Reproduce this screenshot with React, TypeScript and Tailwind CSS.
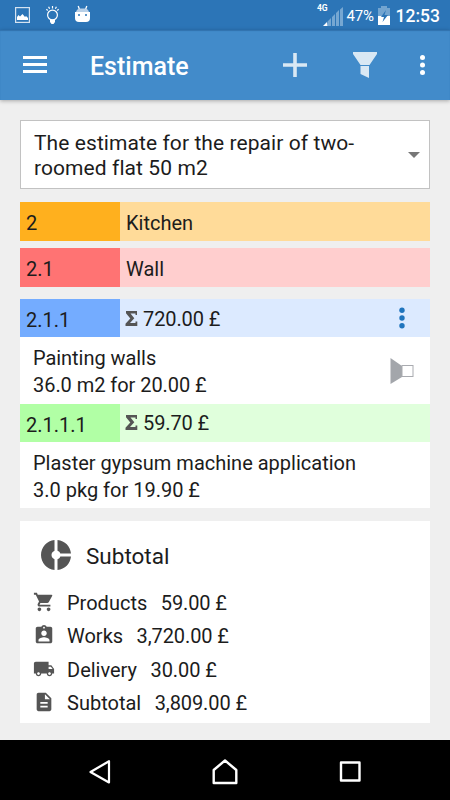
import React from 'react';
import { MdAssignmentInd, MdDescription, MdDonutSmall, MdLocalShipping, MdShoppingCart } from 'react-icons/md';

const totals = [
  { label: 'Products', value: '59.00 £', icon: MdShoppingCart },
  { label: 'Works', value: '3,720.00 £', icon: MdAssignmentInd },
  { label: 'Delivery', value: '30.00 £', icon: MdLocalShipping },
  { label: 'Subtotal', value: '3,809.00 £', icon: MdDescription },
];

const StatusBar: React.FC = () => (
  <div className="flex h-[30px] shrink-0 items-center bg-[#2c75b7] pl-[15px] pr-[10px] text-white">
    <svg width="15" height="16" viewBox="0 0 15 16" fill="none">
      <rect x="0.6" y="0.6" width="13.8" height="14.8" stroke="#d5e3f1" strokeWidth="1.2" />
      <path d="M2 13v-3l1.5-2 1.5 1.5L7.5 7 10 10l1-1 2 2v2z" fill="#fff" />
    </svg>
    <svg className="ml-[16px]" width="13" height="20" viewBox="0 0 13 20" fill="none" stroke="#fff" strokeWidth="1.2">
      <circle cx="6.5" cy="10" r="4.9" />
      <path d="M6.5 1v2.5M2.6 1.8l1 2M10.4 1.8l-1 2M.3 4.3l1.5 1.2M12.7 4.3l-1.5 1.2" />
      <path d="M4 14.5h5v2.5l-1.5 2h-2L4 17z" fill="#fff" stroke="none" />
    </svg>
    <svg className="mb-[3px] ml-[16px]" width="15" height="18" viewBox="0 0 15 18">
      <path d="M3.2 1l1.3 3.5M11.8 1l-1.3 3.5" stroke="#fff" strokeWidth="1.3" />
      <path d="M0 7h15v6q0 4-4 4H4q-4 0-4-4z" fill="#fff" />
      <path d="M1 7q1-3.500 4-3.500h5q3 0 4 3.500z" fill="#b9d0e7" />
      <path d="M3 9h2v2H3zM10 9h2v2h-2z" fill="#5d96c9" />
    </svg>
    <div className="ml-auto flex items-center">
      <span className="mb-[15px] text-[8.500px] leading-[8px] font-bold">4G</span>
      <svg className="mt-[2px] -ml-[5px]" width="20" height="19" viewBox="0 0 20 19">
        <path d="M4.500 14.500L8 11v8H4.500zM9 10l3-3v12H9zM13 6l3-3v16h-3zM17 2.500L20 0v19h-3z" fill="#76a7d2" />
        <path d="M0 19l4-4 .5 4z" fill="#fff" />
      </svg>
      <span className="mt-[2px] ml-[4px] w-[28px] text-[15px] tracking-[-0.2px]">47%</span>
      <svg className="ml-[3px]" width="12" height="19" viewBox="0 0 12 19">
        <path d="M3 0h6v2h3v9H0V2h3z" fill="#72a4d0" />
        <path d="M0 10h12v9H0z" fill="#fff" />
        <path d="M8 4L3 11h3l-1.500 5L10 9H6.500z" fill="#2c75b7" />
      </svg>
      <span className="mt-[2px] ml-[6px] text-[17.500px] font-medium">12:53</span>
    </div>
  </div>
);

const Header: React.FC = () => (
  <header className="z-10 flex h-[70px] shrink-0 items-center bg-[#428bca] pl-[23px] pr-[24px] shadow-[inset_0_1px_1px_#3172ad,0_1px_4px_rgba(0,0,0,0.3)]">
    <div className="mb-[1px] flex w-6 flex-col gap-[4px]">
      <span className="h-[3px] bg-white" />
      <span className="h-[3px] bg-white" />
      <span className="h-[3px] bg-white" />
    </div>
    <h1 className="mt-[3px] ml-[43px] text-[25px] leading-8 font-medium text-white">Estimate</h1>
    <svg className="ml-auto" width="24" height="24" viewBox="0 0 24 24" fill="#d9e8f4">
      <path d="M10.200 0h3.600v10.200H24v3.600H13.800V24h-3.600V13.800H0v-3.600h10.200z" />
    </svg>
    <svg className="ml-[46px]" width="24" height="26" viewBox="0 0 24 26" fill="#d9e8f4">
      <path d="M0 0h24v2l-7.500 11h-9L0 2zM7.500 14h8.500v12l-8.500-4z" />
    </svg>
    <svg className="ml-[43px]" width="6" height="22" viewBox="0 0 6 22" fill="#fff">
      <circle cx="2.500" cy="3.500" r="2.500" />
      <circle cx="2.500" cy="11" r="2.500" />
      <circle cx="2.500" cy="18.500" r="2.500" />
    </svg>
  </header>
);

const Sum: React.FC<{ value: string }> = ({ value }) => (
  <span className="flex items-center">
    <svg className="mr-[5px] mb-[1px]" width="13" height="15" viewBox="0 0 13 15" fill="#555">
      <path d="M1 0h11v4h-1.500V2.500H5.500L9.300 7.300 5 12h5.500v-1.500H12.300V15H.5v-2.300l4.800-5.200L1 2.200z" />
    </svg>
    {value}
  </span>
);

const App: React.FC = () => {
  return (
    <div className="flex h-[800px] w-[450px] flex-col overflow-hidden bg-[#efefef] font-['Roboto',sans-serif] text-[20px] text-[#1c1c1c]">
      <StatusBar />
      <Header />

      <main className="flex-1 px-5 pt-[20px]">
        <div className="flex h-[69px] items-center justify-between border border-[#c2c2c2] bg-white pr-[9px] pl-[13px]">
          <p className="w-[350px] pt-[2px] text-[21px] leading-[25px] tracking-[0.08px]">The estimate for the repair of two-roomed flat 50 m2</p>
          <svg width="12" height="6" viewBox="0 0 12 6">
            <path d="M0 0h12L6 6z" fill="#777" />
          </svg>
        </div>

        <div className="mt-[13px] flex h-[39px] items-center bg-[#ffdb99]">
          <div className="flex h-full w-[100px] items-center bg-[#ffb01e] pl-[6px] pt-[2px]">2</div>
          <span className="pt-[2px] pl-[6px]">Kitchen</span>
        </div>
        <div className="mt-[7px] flex h-[39px] items-center bg-[#ffcece]">
          <div className="flex h-full w-[100px] items-center bg-[#ff7373] pl-[6px] pt-[2px]">2.1</div>
          <span className="pt-[2px] pl-[6px]">Wall</span>
        </div>

        <section className="mt-[12px] h-[209px] bg-white">
          <div className="flex h-[38px] items-center bg-[#dceaff] pr-[25px]">
            <div className="flex h-full w-[100px] items-center bg-[#74acff] pt-[4px] pl-[6px]">2.1.1</div>
            <div className="pt-[1px] pl-[5px] tracking-[-0.1px]"><Sum value="720.00 £" /></div>
            <svg className="ml-auto" width="6" height="22" viewBox="0 0 6 22" fill="#1f74bd">
              <circle cx="3" cy="3.200" r="2.700" />
              <circle cx="3" cy="11" r="2.700" />
              <circle cx="3" cy="18.800" r="2.700" />
            </svg>
          </div>
          <div className="flex h-[67px] items-center justify-between pr-[16px] pl-[13px]">
            <p className="pt-[3px] leading-[27px] tracking-[-0.05px]">Painting walls<br />36.0 m2 for 20.00 £</p>
            <svg width="24" height="26" viewBox="0 0 24 26">
              <path d="M0.500 0L12 8v11L0.500 26z" fill="#a3a6ab" />
              <rect x="12" y="7.500" width="11" height="11" fill="none" stroke="#a9abb0" />
            </svg>
          </div>
          <div className="flex h-[38px] items-center bg-[#e0ffdc]">
            <div className="flex h-full w-[100px] items-center bg-[#b1ffa5] pt-[3px] pl-[6px]">2.1.1.1</div>
            <div className="pl-[5px] tracking-[-0.1px]"><Sum value="59.70 £" /></div>
          </div>
          <p className="pt-[8px] pl-[13px] leading-[27px]">Plaster gypsum machine application<br />3.0 pkg for 19.90 £</p>
        </section>

        <section className="mt-[13px] h-[202px] bg-white pt-[16px] pl-[13px]">
          <div className="flex h-[36px] items-center pl-[5px]">
            <MdDonutSmall size={36} color="#555" />
            <h2 className="pt-[3px] pl-[12px] text-[22.500px]">Subtotal</h2>
          </div>
          <ul className="pt-[13px]">
            {totals.map(({ label, value, icon: Icon }) => (
              <li key={label} className="flex h-[33.500px] items-center">
                <Icon className="mb-[2px] w-[22px]" size={22} color="#555" />
                <span className="pl-[12px]">{label}</span>
                <span className="pl-[13.500px] tracking-[-0.1px]">{value}</span>
              </li>
            ))}
          </ul>
        </section>
      </main>

      <nav className="flex h-[60px] shrink-0 items-center justify-between bg-black pt-[3px] pr-[89px] pl-[89px]">
        <svg width="22" height="24" viewBox="0 0 22 24" fill="none" stroke="#fff" strokeWidth="2.200" strokeLinejoin="round">
          <path d="M1.500 12L20 1.200v21.300z" />
        </svg>
        <svg width="26" height="26" viewBox="0 0 26 26" fill="none" stroke="#fff" strokeWidth="2.400" strokeLinejoin="round">
          <path d="M13 1.500L1.700 11v13h22.600V11z" />
        </svg>
        <svg width="22" height="22" viewBox="0 0 22 22" fill="none" stroke="#fff" strokeWidth="2.400" strokeLinejoin="round">
          <rect x="2" y="1.500" width="18.500" height="18" />
        </svg>
      </nav>
    </div>
  );
};

export default App;
